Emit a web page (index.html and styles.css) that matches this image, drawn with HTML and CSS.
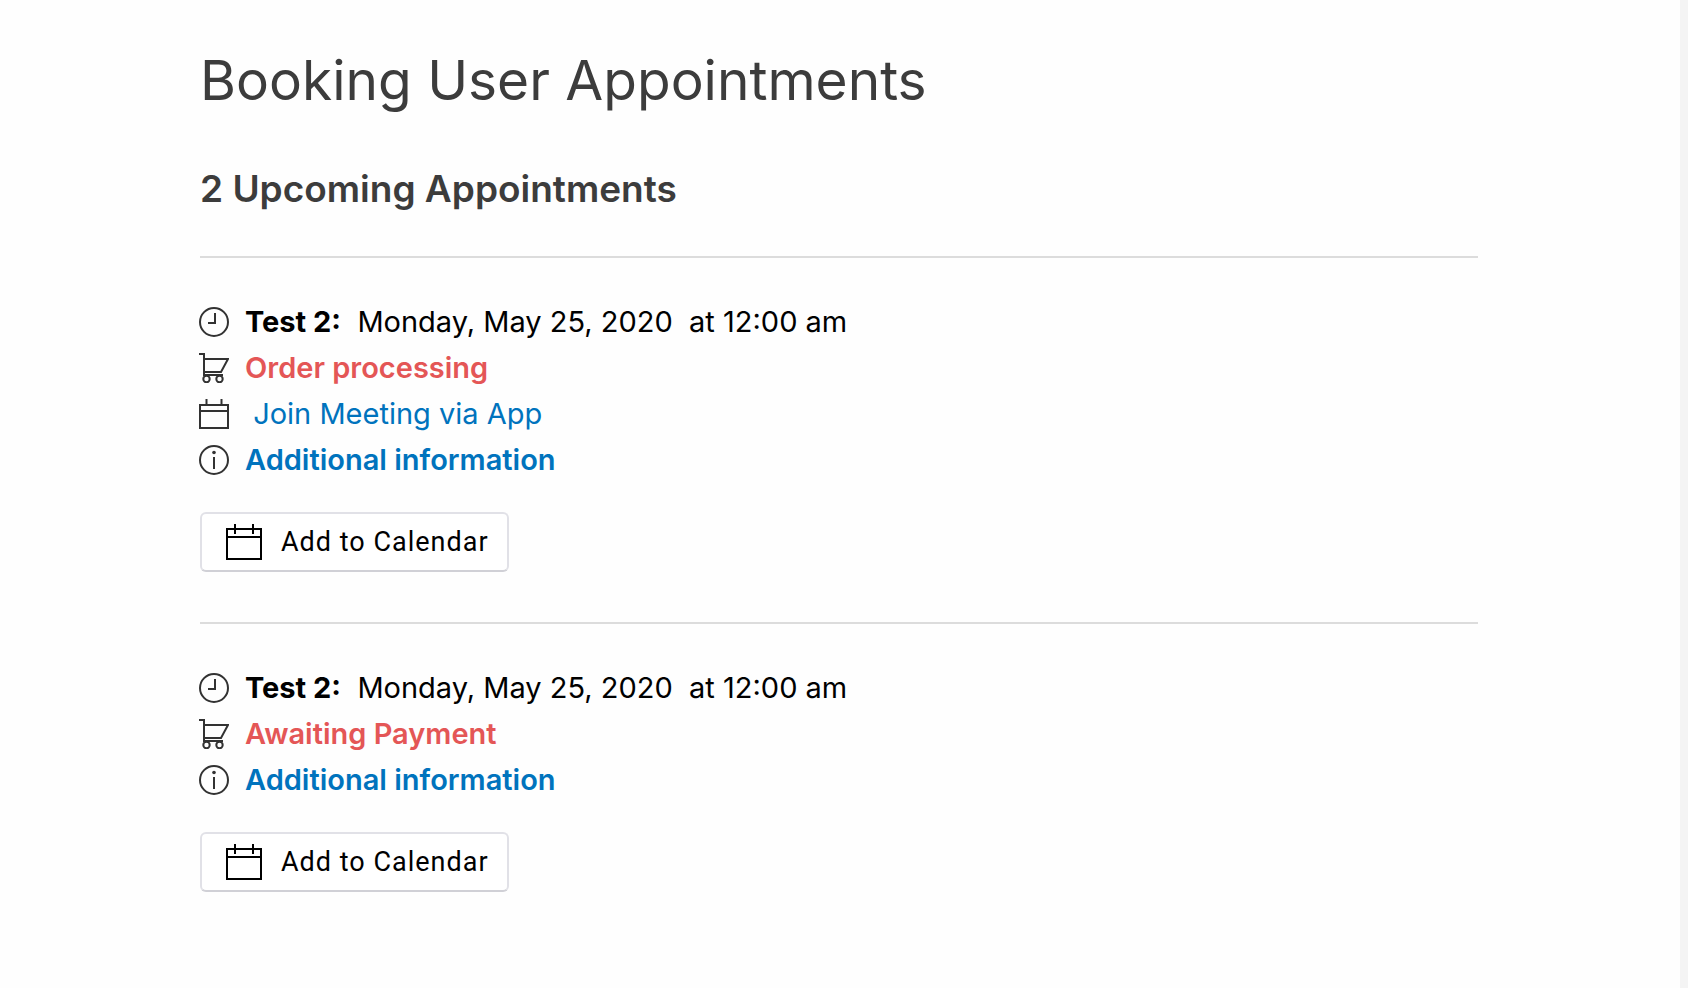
FILE: index.html
```html
<!DOCTYPE html>
<html lang="en">
<head>
    <meta charset="UTF-8">
    <meta name="viewport" content="width=device-width, initial-scale=1.0">
    <title>Booking User Appointments</title>
    <link rel="stylesheet" href="styles.css">
</head>

<body>
<!-- shared icons -->
<svg class="icon-defs" aria-hidden="true">
    <symbol id="icon-clock" viewBox="0 0 30 30">
        <circle cx="15" cy="15" r="14"/>
        <path d="M16 6v10H9"/>
    </symbol>
    <symbol id="icon-cart" viewBox="0 0 30 30">
        <path d="M0 1h5v18h17l7-13H5"/>
        <path d="M5 18v4h19"/>
        <circle cx="7.500" cy="26" r="3.200"/>
        <circle cx="20.500" cy="26" r="3.200"/>
    </symbol>
    <symbol id="icon-calendar" viewBox="0 0 30 30">
        <path d="M1 6h28v23H1zM1 12h28M7.500 0v6M22.500 0v6"/>
    </symbol>
    <symbol id="icon-info" viewBox="0 0 30 30">
        <circle cx="15" cy="15" r="14"/>
        <path d="M15 12v12"/>
        <circle class="dot" cx="15" cy="7.500" r="1.800"/>
    </symbol>
    <symbol id="icon-add" viewBox="0 0 36 36">
        <path d="M1 5h34v30H1zM1 13h34M9 0v10M27 0v10"/>
    </symbol>
</svg>

<main class="page">
    <h1>Booking User Appointments</h1>
    <h2>2 Upcoming Appointments</h2>

    <section class="appointment">
        <ul class="details">
            <li>
                <svg class="icon"><use href="#icon-clock"/></svg>
                <span><strong>Test 2:</strong>&nbsp; Monday, May 25, 2020 &nbsp;at 12:00 am</span>
            </li>
            <li>
                <svg class="icon"><use href="#icon-cart"/></svg>
                <span class="status">Order processing</span>
            </li>
            <li>
                <svg class="icon"><use href="#icon-calendar"/></svg>
                <span>&nbsp;<a href="#">Join Meeting via App</a></span>
            </li>
            <li>
                <svg class="icon"><use href="#icon-info"/></svg>
                <a href="#" class="more">Additional information</a>
            </li>
        </ul>
        <button type="button" class="add-button">
            <svg class="add-icon"><use href="#icon-add"/></svg>
            Add to Calendar
        </button>
    </section>

    <section class="appointment">
        <ul class="details">
            <li>
                <svg class="icon"><use href="#icon-clock"/></svg>
                <span><strong>Test 2:</strong>&nbsp; Monday, May 25, 2020 &nbsp;at 12:00 am</span>
            </li>
            <li>
                <svg class="icon"><use href="#icon-cart"/></svg>
                <span class="status">Awaiting Payment</span>
            </li>
            <li>
                <svg class="icon"><use href="#icon-info"/></svg>
                <a href="#" class="more">Additional information</a>
            </li>
        </ul>
        <button type="button" class="add-button">
            <svg class="add-icon"><use href="#icon-add"/></svg>
            Add to Calendar
        </button>
    </section>
</main>
</body>
</html>
```

FILE: styles.css
```css
* {
    box-sizing: border-box;
    margin: 0;
    padding: 0;
}

body {
    min-height: 100vh;
    border-right: 8px solid #f4f4f4;
    background: #fefefe;
    color: #000;
    font-family: Inter, "Liberation Sans", sans-serif;
    font-size: 29px;
    line-height: 46px;
}

.page {
    padding: 44px 202px 48px 200px;
}

h1 {
    margin-bottom: 48px;
    color: #3c3c3c;
    font-size: 55px;
    font-weight: 400;
    line-height: 72px;
}

h2 {
    margin-bottom: 42px;
    color: #3c3c3c;
    font-size: 37px;
    font-weight: 600;
    line-height: 50px;
}

.appointment {
    padding: 41px 0 50px;
    border-top: 2px solid #dcdcdc;
}

.details {
    margin: 0 0 29px -1px;
    list-style: none;
}

.details li {
    display: flex;
    align-items: center;
    gap: 16px;
}

a {
    color: #0073bd;
    text-decoration: none;
}

strong {
    font-weight: 700;
}

.more {
    font-weight: 600;
}

.status {
    color: #e45656;
    font-weight: 600;
}

.icon-defs {
    display: none;
}

.icon {
    width: 30px;
    height: 30px;
    flex-shrink: 0;
    fill: none;
    stroke: #323232;
    stroke-width: 2;
}

.dot {
    fill: #323232;
    stroke: none;
}

.add-button {
    display: flex;
    align-items: center;
    gap: 19px;
    height: 60px;
    padding: 0 18px 0 24px;
    border: 2px solid #e1e1e7;
    border-bottom-color: #d0d0d6;
    border-radius: 6px;
    background: #fff;
    color: #000;
    font-family: Roboto, sans-serif;
    font-size: 27px;
    letter-spacing: 1px;
    cursor: pointer;
}

.add-icon {
    width: 36px;
    height: 36px;
    fill: none;
    stroke: #000;
    stroke-width: 2;
}
```
